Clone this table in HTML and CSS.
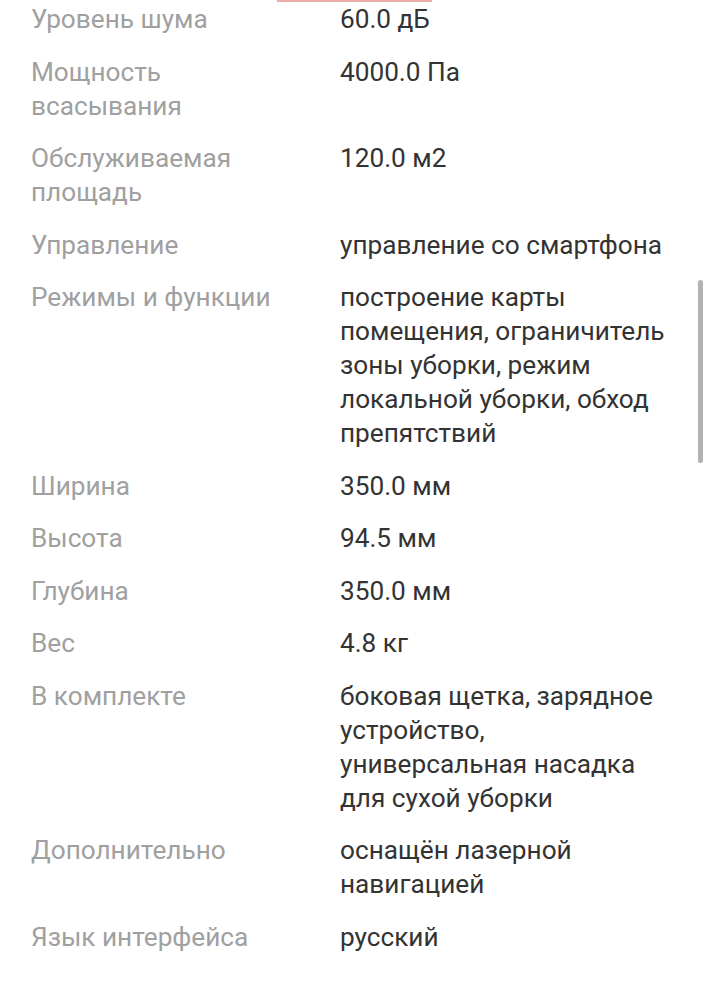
FILE: index.html
```html
<!DOCTYPE html>
<html lang="ru">
<head>
<meta charset="utf-8">
<link rel="stylesheet" href="styles.css">
</head>
<body>
<div class="tab-indicator"></div>
<div class="specs">
  <div class="row"><div class="label">Уровень шума</div><div class="value">60.0 дБ</div></div>
  <div class="row"><div class="label">Мощность всасывания</div><div class="value">4000.0 Па</div></div>
  <div class="row"><div class="label">Обслуживаемая площадь</div><div class="value">120.0 м2</div></div>
  <div class="row"><div class="label">Управление</div><div class="value">управление со смартфона</div></div>
  <div class="row"><div class="label">Режимы и функции</div><div class="value">построение карты помещения, ограничитель зоны уборки, режим локальной уборки, обход препятствий</div></div>
  <div class="row"><div class="label">Ширина</div><div class="value">350.0 мм</div></div>
  <div class="row"><div class="label">Высота</div><div class="value">94.5 мм</div></div>
  <div class="row"><div class="label">Глубина</div><div class="value">350.0 мм</div></div>
  <div class="row"><div class="label">Вес</div><div class="value">4.8 кг</div></div>
  <div class="row"><div class="label">В комплекте</div><div class="value">боковая щетка, зарядное устройство, универсальная насадка для сухой уборки</div></div>
  <div class="row"><div class="label">Дополнительно</div><div class="value">оснащён лазерной навигацией</div></div>
  <div class="row"><div class="label">Язык интерфейса</div><div class="value">русский</div></div>
</div>
<div class="scrollbar"></div>
</body>
</html>
```
FILE: styles.css
```css
html, body {
  margin: 0;
  padding: 0;
  background: #ffffff;
}
body {
  font-family: Roboto, "Noto Sans", sans-serif;
  font-size: 26.2px;
  line-height: 34px;
  width: 708px;
  height: 999px;
  overflow: hidden;
  position: relative;
}
.tab-indicator {
  position: absolute;
  top: 0;
  left: 277px;
  width: 155px;
  height: 2px;
  background: #eab0a8;
}
.specs {
  display: flex;
  flex-direction: column;
  gap: 18.5px;
  padding: 2px 0 0 31px;
}
.row {
  display: grid;
  grid-template-columns: 309px 331px;
}
.label {
  color: #a0a0a0;
  padding-right: 28px;
}
.value {
  color: #333333;
}
.scrollbar {
  position: absolute;
  left: 698px;
  top: 280px;
  width: 5px;
  height: 183px;
  border-radius: 3px;
  background: #b3b3b3;
}
```
